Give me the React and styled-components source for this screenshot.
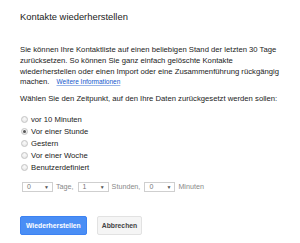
import React from "react";
import styled, { createGlobalStyle } from "styled-components";

const GlobalStyle = createGlobalStyle`
  html, body {
    margin: 0;
    padding: 0;
    background: #fff;
  }
  body {
    font-family: "Liberation Sans", Arial, sans-serif;
    color: #222;
  }
`;

const Dialog = styled.div`
  width: 300px;
  height: 243px;
  padding: 11px 20px 0;
  box-sizing: border-box;
  overflow: hidden;
`;

const Title = styled.h1`
  margin: 0;
  font-size: 9.4px;
  line-height: 12px;
  font-weight: normal;
  color: #222;
`;

const Text = styled.p`
  margin: ${p => p.top || 0}px 0 0;
  font-size: 7.7px;
  line-height: 10.6px;
  color: #222;
`;

const MoreLink = styled.a`
  display: inline-block;
  margin-left: 7px;
  font-size: 6.5px;
  line-height: 8px;
  color: #15c;
  text-decoration: underline;
  text-decoration-color: #9ab6e8;
`;

const RadioList = styled.div`
  margin-top: 9px;
  display: flex;
  flex-direction: column;
`;

const RadioRow = styled.label`
  display: flex;
  align-items: center;
  height: 12px;
  font-size: 7.7px;
  color: #222;
`;

const RadioDot = styled.span`
  width: 7px;
  height: 7px;
  margin: 0 3px 0 1px;
  border-radius: 50%;
  box-sizing: border-box;
  border: 1px solid #c4c4c4;
  background: radial-gradient(circle at 50% 35%, #fafafa 0%, #e2e2e2 100%);
  display: flex;
  align-items: center;
  justify-content: center;
  &::after {
    content: "";
    width: 3px;
    height: 3px;
    border-radius: 50%;
    background: ${p => (p.checked ? "#555" : "transparent")};
  }
`;

const TimeRow = styled.div`
  margin-top: 8px;
  display: flex;
  align-items: center;
  gap: 3px;
  padding-left: 2px;
  font-size: 7.2px;
  color: #888;
`;

const Select = styled.div`
  width: 31px;
  height: 10px;
  box-sizing: border-box;
  border: 1px solid #cfcfcf;
  background: #fff;
  display: flex;
  align-items: center;
  justify-content: space-between;
  padding: 0 3px 0 4px;
  font-size: 7px;
  color: #777;
`;

const Arrow = styled.span`
  font-size: 5px;
  color: #555;
`;

const Unit = styled.span`
  margin-right: 1px;
`;

const Buttons = styled.div`
  margin-top: 24px;
  display: flex;
  gap: 10px;
`;

const Button = styled.button`
  height: 19px;
  padding: 0 ${p => (p.primary ? 5 : 4)}px;
  min-width: ${p => (p.primary ? 66 : 45)}px;
  box-sizing: border-box;
  border-radius: 2px;
  border: 1px solid ${p => (p.primary ? "#3d82f2" : "#e2e2e2")};
  background: ${p => (p.primary ? "#4a8ef5" : "#f5f5f5")};
  color: ${p => (p.primary ? "#fff" : "#444")};
  font-family: "Liberation Sans", Arial, sans-serif;
  font-weight: bold;
  font-size: 6.8px;
`;

const options = [
  "vor 10 Minuten",
  "Vor einer Stunde",
  "Gestern",
  "Vor einer Woche",
  "Benutzerdefiniert",
];

export default function App() {
  return (
    <>
      <GlobalStyle />
      <Dialog>
        <Title>Kontakte wiederherstellen</Title>
        <Text top={22.4}>
          Sie können Ihre Kontaktliste auf einen beliebigen Stand der letzten 30 Tage
          zurücksetzen. So können Sie ganz einfach gelöschte Kontakte
          wiederherstellen oder einen Import oder eine Zusammenführung rückgängig
          machen.
          <MoreLink href="#">Weitere Informationen</MoreLink>
        </Text>
        <Text top={6.5}>
          Wählen Sie den Zeitpunkt, auf den Ihre Daten zurückgesetzt werden sollen:
        </Text>
        <RadioList>
          {options.map((o, i) => (
            <RadioRow key={o}>
              <RadioDot checked={i === 1} />
              {o}
            </RadioRow>
          ))}
        </RadioList>
        <TimeRow>
          <Select>0<Arrow>▼</Arrow></Select>
          <Unit>Tage,</Unit>
          <Select>1<Arrow>▼</Arrow></Select>
          <Unit>Stunden,</Unit>
          <Select>0<Arrow>▼</Arrow></Select>
          <Unit>Minuten</Unit>
        </TimeRow>
        <Buttons>
          <Button primary>Wiederherstellen</Button>
          <Button>Abbrechen</Button>
        </Buttons>
      </Dialog>
    </>
  );
}
